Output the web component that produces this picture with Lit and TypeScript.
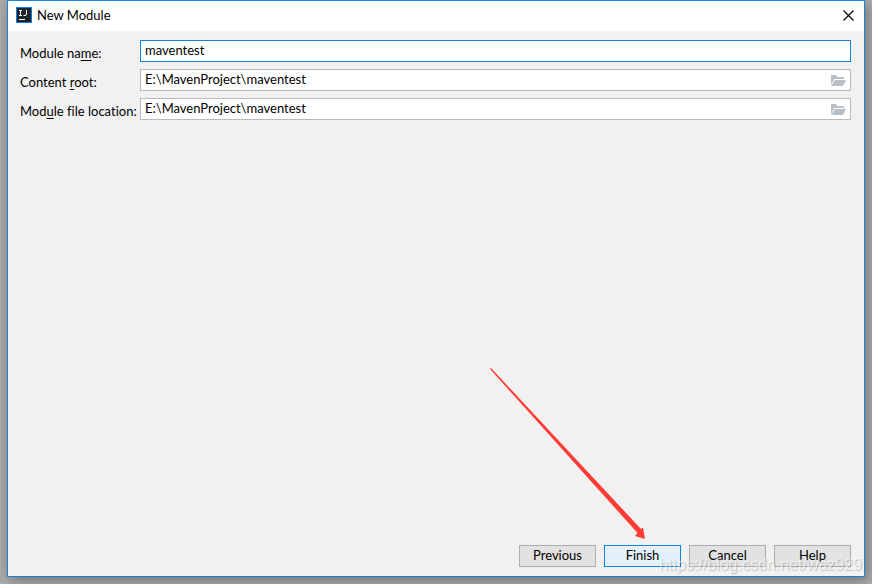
import { LitElement, html, css, svg } from "lit";
import { customElement, state } from "lit/decorators.js";

const folderIcon = html`<svg width="16" height="13" viewBox="0 0 16 13" aria-hidden="true">
  ${svg`<path fill="#b9c0c5" d="M1 1h5l1 2H14v2H4.500L1 11z"/><path fill="#b9c0c5" d="M5 6H16l-3 6H1z"/>`}
</svg>`;

@customElement("app-root")
export class AppRoot extends LitElement {
  static styles = css`
    :host {
      display: flex;
      box-sizing: border-box;
      min-height: 100vh;
      padding: 0 7px 7px;
      overflow: hidden;
      background: #ababab;
      color: #000;
      font: 13px/18px Lato, "Open Sans", sans-serif;
      font-variant-ligatures: none;
    }
    .dialog {
      position: relative;
      flex: 1;
      min-width: 0;
      display: flex;
      flex-direction: column;
      border: 1px solid #1883d7;
      background: #f1f1f1;
      box-shadow: 2px 3px 12px rgba(0, 0, 0, 0.35);
    }
    .titlebar {
      display: flex;
      align-items: center;
      gap: 5px;
      box-sizing: border-box;
      height: 30px;
      padding: 0 9px 2px 8px;
      background: #fff;
    }
    .title {
      flex: 1;
      margin: 0;
      font: inherit;
    }
    svg {
      display: block;
    }
    .close,
    .browse {
      display: grid;
      place-items: center;
      padding: 0;
      border: 0;
      background: none;
    }
    .close {
      width: 13px;
      height: 20px;
    }
    .form {
      display: grid;
      grid-template-columns: 120px 1fr;
      row-gap: 7px;
      padding: 9px 13px 0 12px;
    }
    .label {
      padding-top: 4px;
      height: 18px;
      white-space: nowrap;
    }
    .mnemonic {
      text-decoration: underline;
      text-underline-offset: 2px;
      text-decoration-skip-ink: none;
    }
    .field {
      display: flex;
      align-items: center;
      box-sizing: border-box;
      height: 22px;
      border: 1px solid #bababa;
      background: #fff;
    }
    .field.active {
      border-color: #0f84dc;
    }
    .input {
      flex: 1;
      min-width: 0;
      height: 20px;
      box-sizing: border-box;
      padding: 0 4px 2px;
      border: 0;
      outline: 0;
      background: none;
      color: inherit;
      font: inherit;
      font-variant-ligatures: none;
    }
    .browse {
      width: 24px;
      height: 20px;
    }
    .actions {
      display: flex;
      justify-content: flex-end;
      gap: 8px;
      margin-top: auto;
      padding: 0 13px 9px;
    }
    .button {
      width: 77px;
      height: 22px;
      padding: 0 0 2px;
      border: 1px solid #adadad;
      background: #e2e2e2;
      color: inherit;
      font: inherit;
      font-variant-ligatures: none;
    }
    .button.primary {
      border-color: #0f84dc;
      background: #e4f1fb;
    }
    .arrow {
      position: absolute;
      right: 218px;
      bottom: 36px;
      pointer-events: none;
    }
    .watermark {
      position: absolute;
      right: 2px;
      bottom: 1px;
      color: rgba(255, 255, 255, 0.6);
      font: 16px/20px "Liberation Sans", sans-serif;
      text-shadow: 1px 1px 1px rgba(0, 0, 0, 0.2);
      white-space: nowrap;
      pointer-events: none;
    }
  `;

  @state() private moduleName = "maventest";
  @state() private path = "E:\\MavenProject\\maventest";

  render() {
    return html`
      <main class="dialog">
        <header class="titlebar">
          <svg width="16" height="16" viewBox="0 0 16 16" aria-hidden="true">
            <rect x="0.5" y="0.5" width="15" height="15" fill="#20242b" stroke="#087cfa" />
            <path d="M3 3.5h3M4.5 3.5v5M3 8.5h3M10.500 3v4q0 1.500-1.500 1.500H7.500" fill="none" stroke="#fff" />
            <path d="M3 12.5h6" stroke="#fff" />
          </svg>
          <h1 class="title">New Module</h1>
          <button class="close" type="button" aria-label="Close">
            <svg width="11" height="11" viewBox="0 0 11 11" aria-hidden="true">
              <path d="M0.5 0.5l10 10M10.5 0.5l-10 10" fill="none" stroke="#000" stroke-width="1.2" />
            </svg>
          </button>
        </header>

        <div class="form">
          <label class="label" for="name">Module na<span class="mnemonic">m</span>e:</label>
          <div class="field active">
            <input class="input" id="name" type="text" .value=${this.moduleName} />
          </div>
          <label class="label" for="root">Content <span class="mnemonic">r</span>oot:</label>
          <div class="field">
            <input class="input" id="root" type="text" .value=${this.path} />
            <button class="browse" type="button" aria-label="Browse content root">${folderIcon}</button>
          </div>
          <label class="label" for="location">Mod<span class="mnemonic">u</span>le file location:</label>
          <div class="field">
            <input class="input" id="location" type="text" .value=${this.path} />
            <button class="browse" type="button" aria-label="Browse module file location">${folderIcon}</button>
          </div>
        </div>

        <footer class="actions">
          <button class="button" type="button">Previous</button>
          <button class="button primary" type="button">Finish</button>
          <button class="button" type="button">Cancel</button>
          <button class="button" type="button">Help</button>
        </footer>

        <svg class="arrow" width="156" height="172" viewBox="0 0 156 172" aria-hidden="true">
          <path d="M0 1L1 0L151 161L153 159.500L155 171L145 168L147.500 165Z" fill="#ff3b35" />
        </svg>
        <div class="watermark">https://blog.csdn.net/waz929</div>
      </main>
    `;
  }
}
